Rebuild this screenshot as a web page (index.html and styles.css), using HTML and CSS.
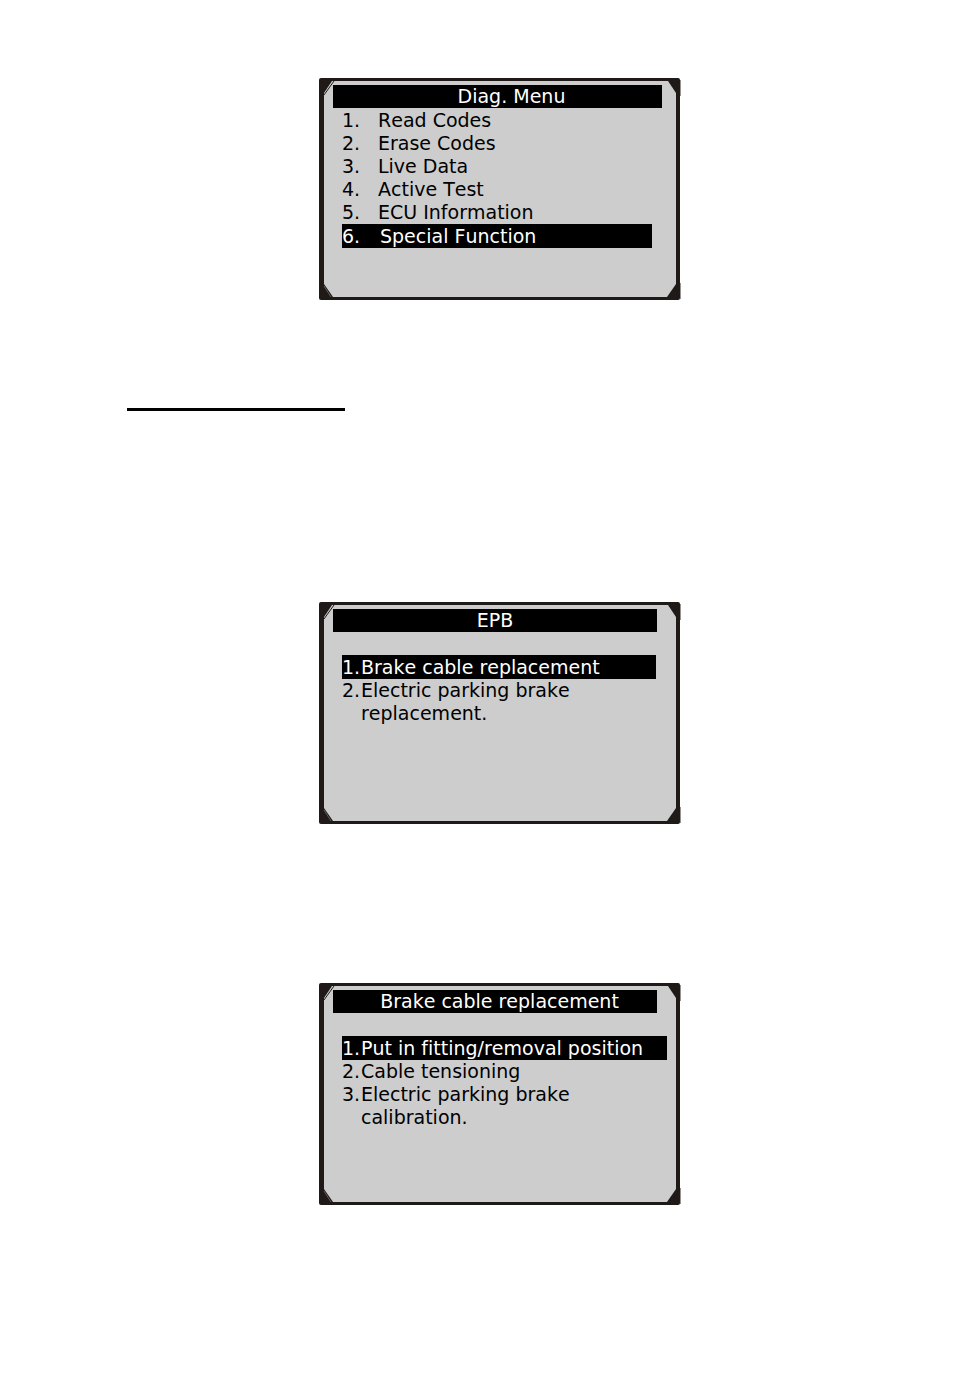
FILE: index.html
```html
<!doctype html>
<html lang="en">
<head>
<meta charset="utf-8">
<title>Special Function - EPB</title>
<link rel="stylesheet" href="styles.css">
</head>
<body>

<!-- frame shared by all the screens -->
<svg class="defs" width="0" height="0" aria-hidden="true">
    <symbol id="frame" viewBox="0 0 362 222">
        <path d="M361 2h1v16h-1zM361 205h1v16h-1z" fill="#96928f"/>
        <rect width="361" height="222" rx="2" fill="#1f1a17"/>
        <path d="M15 3H349L357 15V206L348 219H14L5 206V17z" fill="#cdcdcd"/>
        <path d="M5 15L13 3H16L5 19z" fill="#cdcdcd"/>
        <path d="M5 17L15 3" fill="none" stroke="#1f1a17"/>
        <path d="M5 208L12 219" fill="none" stroke="#605c59"/>
    </symbol>
</svg>

<main>
    <section class="screen menu">
        <svg class="frame" aria-hidden="true"><use href="#frame"/></svg>
        <h2>Diag. Menu</h2>
        <ol>
            <li><span>1.</span>Read Codes</li>
            <li><span>2.</span>Erase Codes</li>
            <li><span>3.</span>Live Data</li>
            <li><span>4.</span>Active Test</li>
            <li><span>5.</span>ECU Information</li>
            <li class="on"><span>6.</span>Special Function</li>
        </ol>
    </section>

    <hr>

    <section class="screen epb">
        <svg class="frame" aria-hidden="true"><use href="#frame"/></svg>
        <h2>EPB</h2>
        <ol>
            <li class="on"><span>1.</span>Brake cable replacement</li>
            <li><span>2.</span>Electric parking brake<br>replacement.</li>
        </ol>
    </section>

    <section class="screen cable">
        <svg class="frame" aria-hidden="true"><use href="#frame"/></svg>
        <h2>Brake cable replacement</h2>
        <ol>
            <li class="on"><span>1.</span>Put in fitting/removal position</li>
            <li><span>2.</span>Cable tensioning</li>
            <li><span>3.</span>Electric parking brake<br>calibration.</li>
        </ol>
    </section>
</main>

</body>
</html>
```

FILE: styles.css
```css
body{
    margin: 0;
    background-color: #fff;
    color: #000;
    font-family: Verdana,"DejaVu Sans",sans-serif;
    font-size: 19px;
    line-height: 23px;
    font-kerning: none;
    font-variant-ligatures: none;
}
.defs{
    position: absolute;
}
main{
    display: flex;
    flex-direction: column;
    align-items: center;
    padding: 78px 0 160px 46px;
}
hr{
    align-self: flex-start;
    width: 218px;
    height: 3px;
    margin: 108px 0 191px 81px;
    border: 0;
    background-color: #000;
}
.screen{
    position: relative;
    box-sizing: border-box;
    width: 362px;
    min-height: 222px;
    padding: 7px 14px;
}
.frame{
    position: absolute;
    top: 0;
    left: 0;
    width: 100%;
    height: 100%;
}
h2,ol{
    position: relative;
    margin: 0;
    padding: 0;
    font-size: 19px;
    font-weight: normal;
    white-space: nowrap;
}
h2{
    width: 324px;
    box-sizing: border-box;
    background-color: #000;
    color: #fff;
    text-align: center;
}
ol{
    margin: 23px 0 0 9px;
    list-style: none;
}
li{
    display: flow-root;
    box-sizing: border-box;
    width: 314px;
    padding-left: 19px;
}
li span{
    float: left;
    width: 19px;
    margin-left: -19px;
}
.on{
    padding-top: 1px;
    background-color: #000;
    color: #fff;
}
.menu h2{
    width: 329px;
    padding-left: 28px;
}
.menu ol{
    margin-top: 1px;
}
.menu li{
    width: 310px;
    padding-left: 36px;
}
.menu li span{
    width: 36px;
    margin-left: -36px;
}
.menu .on{
    padding-left: 38px;
}
.menu .on span{
    width: 38px;
    margin-left: -38px;
}
.cable{
    margin-top: 159px;
}
.cable h2{
    padding-left: 9px;
}
.cable .on{
    width: 325px;
}
```
